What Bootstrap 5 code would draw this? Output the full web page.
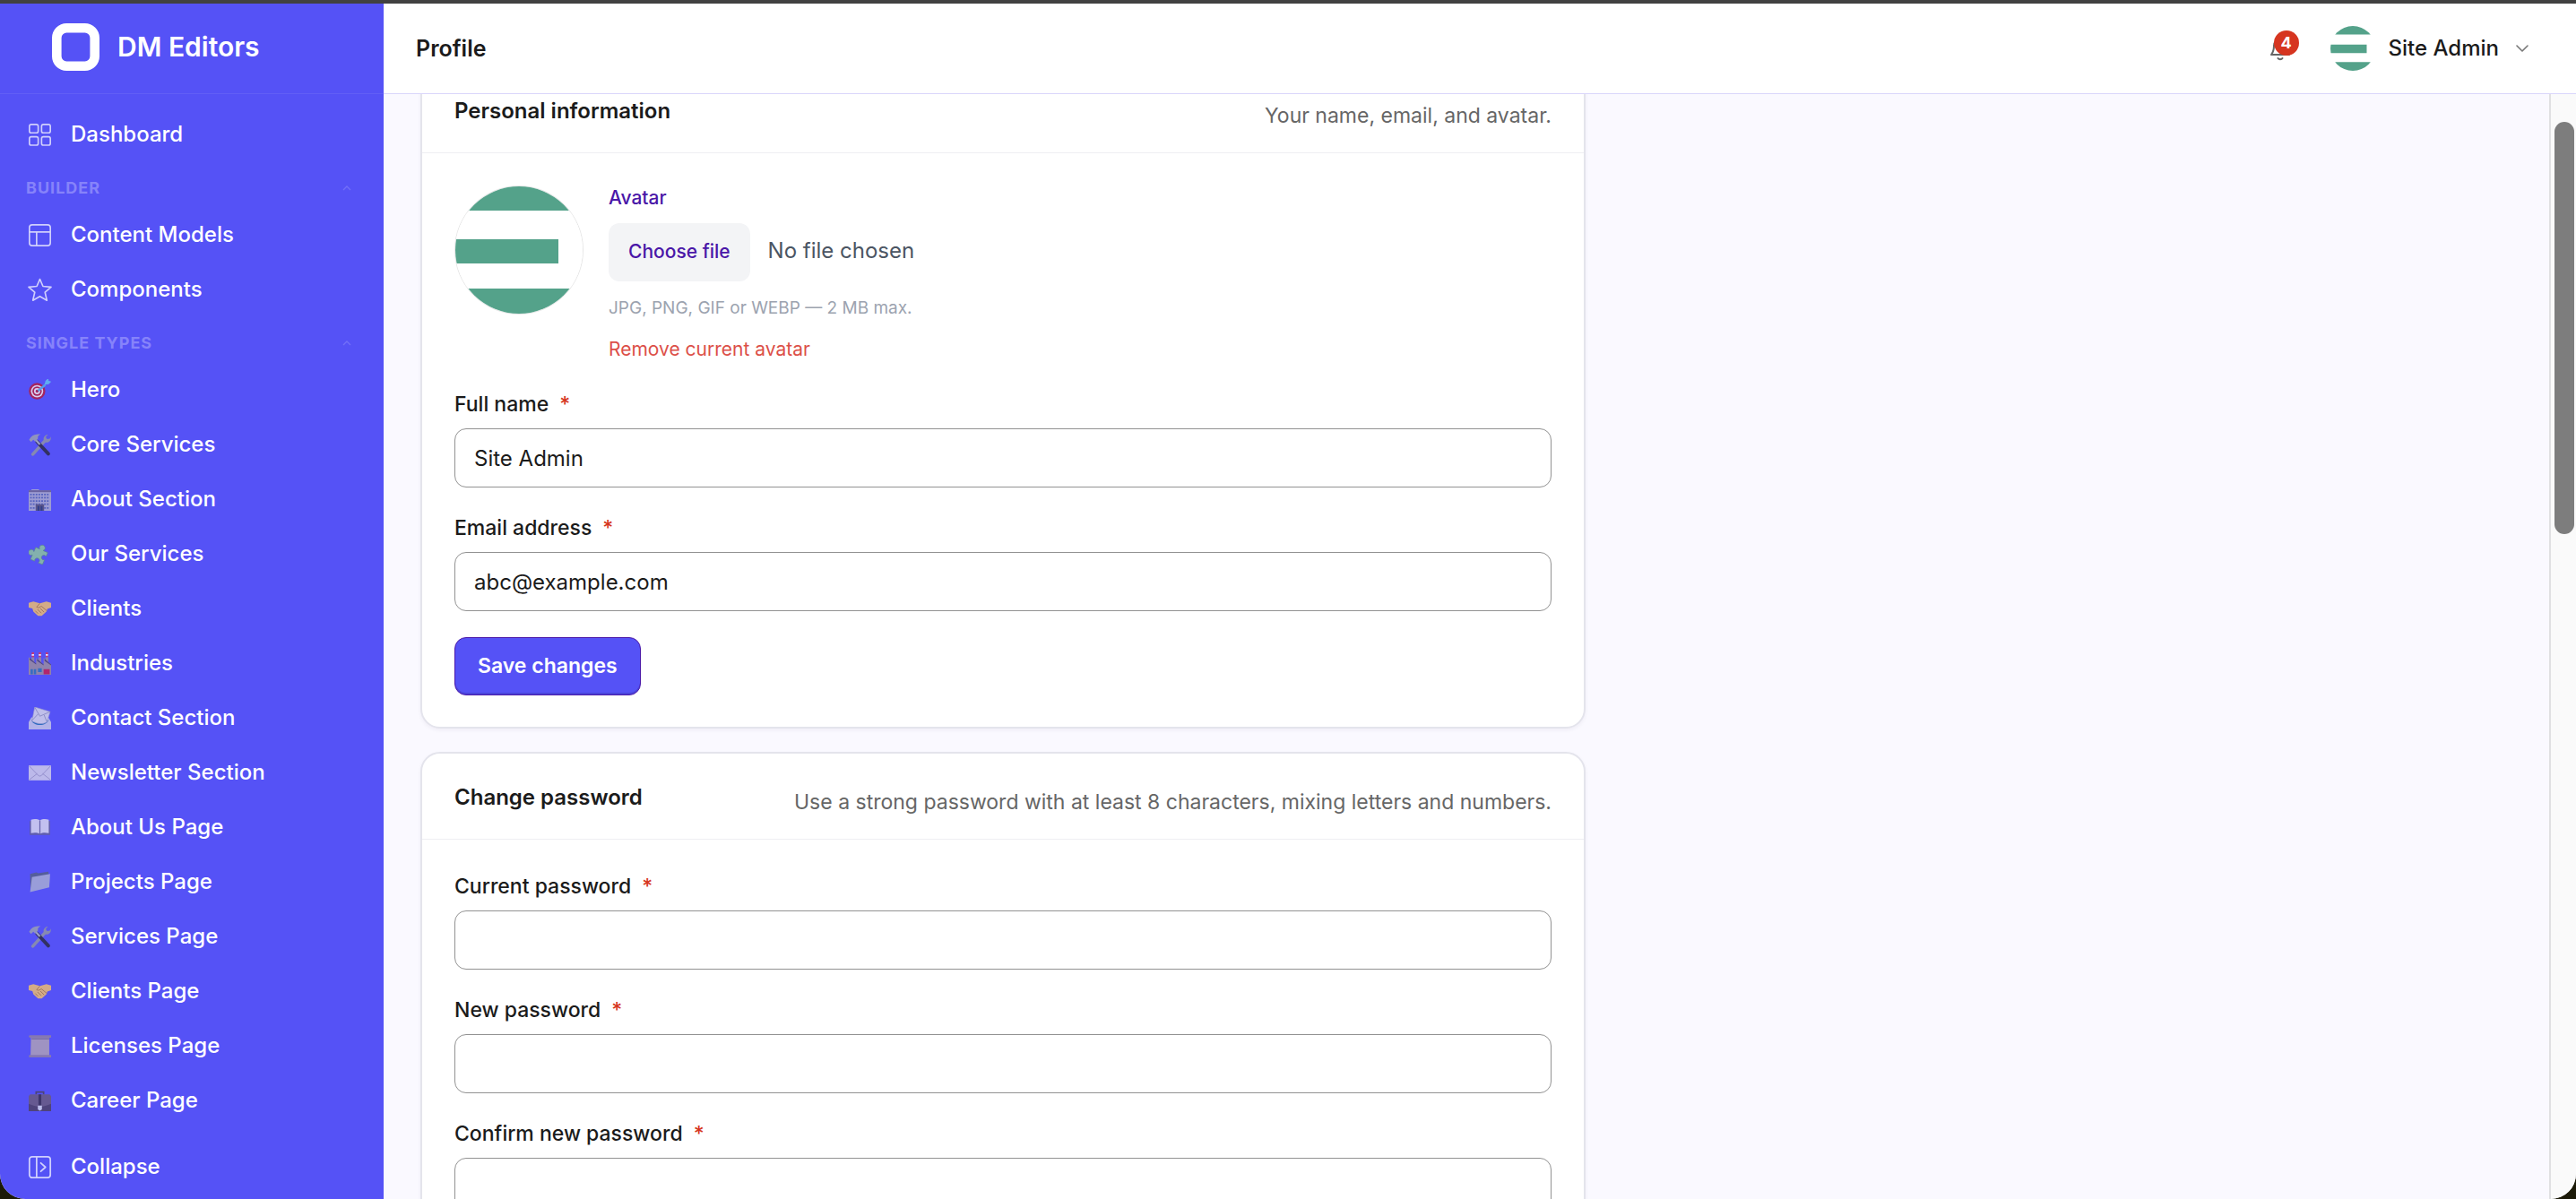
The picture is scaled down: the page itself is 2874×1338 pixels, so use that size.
<!DOCTYPE html>
<html lang="en">
<head>
<meta charset="utf-8">
<meta name="viewport" content="width=device-width, initial-scale=1">
<title>Profile – DM Editors</title>
<link href="https://cdn.jsdelivr.net/npm/bootstrap@5.3.0/dist/css/bootstrap.min.css" rel="stylesheet">
<style>
:root{--brand:#5552f6;--violet:#4a17a8;--ink:#1b1b1b;--danger:#d63520}
body{font-family:Inter,"Liberation Sans",sans-serif;font-size:24px;line-height:32px;color:var(--ink);background:#1c1a08}
.frame{border-radius:0 0 28px 28px;border-top:4px solid #414141;background:#faf9ff}
.sidebar{width:428px;background:var(--brand)}
.brand{height:101px;padding:0 58px 4px;gap:20px;border-bottom:1px solid #625ff6;font-size:30px;font-weight:600}
.side-nav{padding-top:15px}
.side-list{gap:1px}
.side-link{height:60px;padding:0 32px;gap:22px;font-weight:500;font-size:24px;color:#fff;text-decoration:none;border:0;background:none;text-align:left}
.side-link svg{width:25px;height:25px;flex:none;overflow:visible;opacity:.85}
.line-icon{fill:none;stroke:currentColor;stroke-linecap:round;stroke-linejoin:round}
.side-link svg.line-icon{opacity:.72}
.side-group{height:52px;padding:8px 36px 0 29px;font-size:18px;font-weight:700;letter-spacing:1px;color:#8683fa;border:0;background:none}
.side-group svg{width:10px;height:6px;opacity:.6}
.side-foot{padding-bottom:6px}
.topbar{height:101px;padding:0 53px 0 36px;background:#fff;border-bottom:1px solid #dad6fb;z-index:2}
.page-title{font-size:25px;line-height:32px;font-weight:600}
.bell{width:32px;height:50px;color:#666;border:0;background:none;margin-right:37px}
.bell svg{width:26px;height:28px}
.bell-count{left:6px;top:5px;width:28px;height:28px;background:var(--danger);color:#fff;font-size:18px;line-height:28px;font-weight:700}
.user-btn{gap:15px;border:0;background:none;font-weight:500;color:var(--ink)}
.user-btn .caret{width:14px;height:8px;margin-left:4px;color:#777}
.content{padding:0 41px;margin-top:-32px}
.panel{width:100%;max-width:1300px;border:2px solid #e4e4ec;border-radius:22px;background:#fff;box-shadow:0 2px 4px rgba(30,20,80,.05);margin-bottom:26px}
.panel-head{height:96px;padding:8px 36px 0;border-bottom:1px solid #efeff2}
.panel-head h2{font-size:24px;line-height:32px;font-weight:600;margin:0 0 6px}
.panel-head p{margin:4px 0 0;color:#666;font-size:23px}
.panel-body{padding:36px 36px 35px}
.avatar-lg{width:144px;height:144px;border:1px solid #e6e6e6;flex:none}
.avatar-row{gap:28px;margin-bottom:31px}
.field-cap{font-size:21px;line-height:28px;font-weight:500;margin-bottom:14px;color:var(--violet)}
.pick{height:65px;padding:0 22px 2px;border:0;border-radius:12px;background:#f3f4f6;color:var(--violet);font-size:21px;font-weight:500}
.pick:hover{background:#e9eaee;color:var(--violet)}
.no-file{color:#4b5563;font-size:24px;padding:0 0 4px 20px}
.hint{font-size:19px;line-height:28px;margin-bottom:18px;color:#9ca3af}
.remove{font-size:21px;line-height:28px;color:#dc4f48;text-decoration:none}
.field{margin-bottom:29px}
.field label{display:flex;gap:12px;font-size:23px;line-height:32px;font-weight:500;margin-bottom:11px}
.field label span{color:var(--danger)}
.field .form-control{height:66px;padding:0 21px;border:1px solid #929292;border-radius:13px;font-size:24px;color:var(--ink);background:#fff;box-shadow:none}
.save{height:65px;padding:0 25px;border:1px solid var(--violet);border-radius:13px;background:var(--brand);color:#fff;font-size:23px;font-weight:600;box-shadow:inset 0 -2px 0 #4a44d8}
.save:hover{background:#4744e6;color:#fff;border-color:var(--violet)}
.track{width:30px;border-left:2px solid #e0e0e2;background:#fafafa;padding:31px 2px 0 4px}
.thumb{height:460px;border-radius:11px;background:#7d7d7d}
</style>
<script src="https://cdn.jsdelivr.net/npm/bootstrap@5.3.0/dist/js/bootstrap.bundle.min.js"></script>
</head>
<body class="vh-100 overflow-hidden">
<svg class="d-none" xmlns="http://www.w3.org/2000/svg">
  <symbol id="i-target" viewBox="0 0 24 24"><circle cx="9" cy="13" r="8.800" fill="#b31f45"/><circle cx="9" cy="13" r="6.600" fill="#f0e6f2"/><circle cx="9" cy="13" r="5" fill="#b31f45"/><circle cx="9" cy="13" r="3.300" fill="#f0e6f2"/><circle cx="9" cy="13" r="1.600" fill="#b31f45"/><path d="M10 12.600 18 6" stroke="#55a9e8" stroke-width="2.400"/><path d="m17 6 1-4 3-3 .4 3 3 .6-3 3z" fill="#63bdf0"/></symbol>
  <symbol id="i-tools" viewBox="0 0 24 24"><path d="M4.500 22 17 8" stroke="#8f93a6" stroke-width="3.400" stroke-linecap="round"/><path d="M16 6.500c-.5-3 2-5.500 4.500-5.500L18.300 3.700l1.400 2 3-.5.800-2c1.200 4-2.500 7-5.600 5.800z" fill="#8f93a6"/><path d="M9 8.500 21 21.500" stroke="#2c2c48" stroke-width="3.600" stroke-linecap="round"/><path d="M7 6l5 5.500" stroke="#a7abc0" stroke-width="2.200"/><path d="M.5 6.500C3 1.500 7.500-.5 13 .8 10.500 1.500 9.300 3 10 5L7 8.300 5 6.500 2.500 8.800z" fill="#9a9fb4"/></symbol>
  <symbol id="i-office" viewBox="0 0 24 24"><path d="M3 1h8v2H3zM0 2h24v22H0z" fill="#a9a9cc"/><path d="M0 2h24v2H0z" fill="#6d6591"/><path d="M1.500 6.500h21M1.500 10h21M1.500 13.500h21M1.500 17h21M1.500 21h21" stroke="#5665b5" stroke-width="1.700" stroke-dasharray="1.800 1.200"/><path d="M7.500 17h9v7h-9z" fill="#5a5678"/><path d="M9.500 19h2v5h-2zM12.800 19h2v5h-2z" fill="#2c3c78"/></symbol>
  <symbol id="i-puzzle" viewBox="0 0 24 24"><path transform="rotate(24 12 12)" d="M5 7h4.500a3 3 0 1 1 4 0H19v4.500a2.600 2.600 0 1 0 0 4V21h-5a2.600 2.600 0 1 0-4 0H5v-5a3 3 0 1 1 0-4z" fill="#8cc2a2" stroke="#59907f" stroke-width=".6"/></symbol>
  <symbol id="i-shake" viewBox="0 0 24 24"><path d="M0 5.500 5 4l7 2 7-2 5 1.500v5L20 12l-1 3-5 4.500h-4L5 15l-1-3.500-4-1z" fill="#eabb74"/><path d="M12 6 8.500 10c2 1.500 4 0 5-1l6 5M7 14l3 3M9.500 12.500l4 4M12.500 11.500l4 4" fill="none" stroke="#ab7b45" stroke-width=".9"/></symbol>
  <symbol id="i-factory" viewBox="0 0 24 24"><path d="M3 5h3v6H3zM10.500 5h3v6h-3zM18 5h3v6h-3z" fill="#9888a3"/><path d="M3.300 0h2.400v5H3.300zM10.800 0h2.400v5h-2.400zM18.300 0h2.400v5h-2.400z" fill="#e03357"/><path d="M3.300 2h2.400v1.600H3.300zM10.800 2h2.400v1.600h-2.400zM18.300 2h2.400v1.600h-2.400z" fill="#fff"/><path d="M0 24V5l8 7V6l8 7V6l8 7v11z" fill="#9a8ca0"/><path d="m1 6 7 6v1L1 8zM9 7l7 6v1L9 9zM17 7l7 6v1l-7-5z" fill="#4c4374"/><path d="M2 18h2.500v5.500H2zM5.500 18H8v5.500H5.500zM10 17h4v4h-4z" fill="#3172b8"/><path d="M16 18h6.500v5.500H16z" fill="#c21f55"/></symbol>
  <symbol id="i-inbox" viewBox="0 0 24 24"><path d="M3 11h18l3 5v8H0v-8z" fill="#c3c5e6"/><path d="M3 14h18c-1 7-17 7-18 0z" fill="#2770b8"/><path d="M6.500 0 23 5l-3.500 11c-5 3-10 2-16-1z" fill="#d3d3e8" stroke="#a3a3c8" stroke-width=".6"/><path d="m6.500.3 5.500 9.500L23 5M3.500 14.500 10 7.500M19.500 16l-3-7.500" fill="none" stroke="#8e8eb8" stroke-width=".8"/></symbol>
  <symbol id="i-mail" viewBox="0 0 24 24"><path d="M0 4h24v16H0z" fill="#cfcce8"/><path d="m.5 4.500 9.500 10q2 2 4 0l9.500-10M.5 19.500 9 12.800M23.500 19.500 15 12.800" fill="none" stroke="#9d98c4" stroke-width=".9"/></symbol>
  <symbol id="i-book" viewBox="0 0 24 24"><path d="M1 5h22v15H1z" fill="#625fa2"/><path d="M2.500 3.500c4-1 7-.5 9.500.8 2.500-1.300 5.500-1.800 9.500-.8V18c-4-1-7-.6-9.500.8C9.500 17.400 6.500 17 2.500 18z" fill="#d6d4ee"/><path d="M12 4.300v15.500" stroke="#69669e" stroke-width="1.200"/></symbol>
  <symbol id="i-folder" viewBox="0 0 24 24"><path d="m1.500 3 7-1.500 1.500 1L21 .8 22 5 2 22z" fill="#56618c"/><path d="M3.500 6.500 23 3l-1 14.500L1.500 22.500z" fill="#a6abd4"/></symbol>
  <symbol id="i-scroll" viewBox="0 0 24 24"><path d="M2.500 2h19.500v20.500H2z" fill="#ad9fb9"/><path d="M1.500 1.500h22M1.500 22.700h22" stroke="#8e7fa5" stroke-width="2.600" stroke-linecap="round"/><path d="M3 4h19" stroke="#665a88" stroke-width="1"/></symbol>
  <symbol id="i-case" viewBox="0 0 24 24"><path d="M8 5V2.500h8V5" fill="none" stroke="#4c4360" stroke-width="1.600"/><path d="M1.500 5h21L24 7v16H0V7z" fill="#6a5b80"/><path d="M0 15c8 4 16 4 24 0v8H0z" fill="#4d4166"/><path d="M10.500 5h3v12h-3z" fill="#3b3152"/><path d="M9.800 17h4.400v4l-2.200 1.500L9.800 21z" fill="#cfd0ea"/></symbol>
  <symbol id="i-up" viewBox="0 0 10 6"><path d="m1 5 4-4 4 4" fill="none" stroke="currentColor" stroke-width="1.300"/></symbol>
  <symbol id="i-stripes" viewBox="0 0 142 142"><path fill="#fff" d="M0 0h142v142H0z"/><path fill="#54a28a" d="M0 0h142v27H0zM0 59h115v27H0zM0 114h142v28H0z"/></symbol>
</svg>

<div class="frame d-flex h-100 overflow-hidden">
  <aside class="sidebar d-flex flex-column flex-shrink-0 text-white">
    <div class="brand d-flex align-items-center flex-shrink-0">
      <svg width="53" height="53" viewBox="0 0 53 53" aria-hidden="true"><rect x="5.300" y="5.300" width="42.400" height="42.400" rx="11" fill="none" stroke="#fff" stroke-width="10.600"/></svg>
      <span>DM Editors</span>
    </div>
    <nav class="side-nav flex-grow-1 overflow-hidden">
      <div class="side-list d-flex flex-column">
        <a href="#" class="side-link d-flex align-items-center"><svg class="line-icon" viewBox="0 0 24 24" stroke-width="1.600"><rect x=".8" y=".8" width="9.400" height="9" rx="2"/><rect x="13.800" y=".8" width="9.400" height="9" rx="2"/><rect x=".8" y="14" width="9.400" height="9" rx="2"/><rect x="13.800" y="14" width="9.400" height="9" rx="2"/></svg>Dashboard</a>
      </div>
      <button type="button" class="side-group w-100 d-flex align-items-center justify-content-between">BUILDER<svg><use href="#i-up"/></svg></button>
      <div class="side-list d-flex flex-column">
        <a href="#" class="side-link d-flex align-items-center"><svg class="line-icon" viewBox="0 0 24 24" stroke-width="1.600"><rect x=".8" y=".8" width="22.400" height="22.400" rx="3"/><path d="M.8 8.500h22.400M8.500 8.500v14.700"/></svg>Content Models</a>
        <a href="#" class="side-link d-flex align-items-center"><svg class="line-icon" viewBox="0 0 24 24" stroke-width="1.600"><path d="m12 .5 3.300 7.700 8.700.8-6.500 5.600 2 8.600L12 18.900l-7.500 4.300 2-8.600L0 9l8.700-.8z"/></svg>Components</a>
      </div>
      <button type="button" class="side-group w-100 d-flex align-items-center justify-content-between">SINGLE TYPES<svg><use href="#i-up"/></svg></button>
      <div class="side-list d-flex flex-column">
        <a href="#" class="side-link d-flex align-items-center"><svg><use href="#i-target"/></svg>Hero</a>
        <a href="#" class="side-link d-flex align-items-center"><svg><use href="#i-tools"/></svg>Core Services</a>
        <a href="#" class="side-link d-flex align-items-center"><svg><use href="#i-office"/></svg>About Section</a>
        <a href="#" class="side-link d-flex align-items-center"><svg><use href="#i-puzzle"/></svg>Our Services</a>
        <a href="#" class="side-link d-flex align-items-center"><svg><use href="#i-shake"/></svg>Clients</a>
        <a href="#" class="side-link d-flex align-items-center"><svg><use href="#i-factory"/></svg>Industries</a>
        <a href="#" class="side-link d-flex align-items-center"><svg><use href="#i-inbox"/></svg>Contact Section</a>
        <a href="#" class="side-link d-flex align-items-center"><svg><use href="#i-mail"/></svg>Newsletter Section</a>
        <a href="#" class="side-link d-flex align-items-center"><svg><use href="#i-book"/></svg>About Us Page</a>
        <a href="#" class="side-link d-flex align-items-center"><svg><use href="#i-folder"/></svg>Projects Page</a>
        <a href="#" class="side-link d-flex align-items-center"><svg><use href="#i-tools"/></svg>Services Page</a>
        <a href="#" class="side-link d-flex align-items-center"><svg><use href="#i-shake"/></svg>Clients Page</a>
        <a href="#" class="side-link d-flex align-items-center"><svg><use href="#i-scroll"/></svg>Licenses Page</a>
        <a href="#" class="side-link d-flex align-items-center"><svg><use href="#i-case"/></svg>Career Page</a>
      </div>
    </nav>
    <div class="side-foot">
      <button type="button" class="side-link w-100 d-flex align-items-center"><svg class="line-icon" viewBox="0 0 24 24" stroke-width="1.700"><rect x=".8" y=".8" width="22.400" height="22.400" rx="3"/><path d="M8.500.8v22.400M13 7.500l5 4.500-5 4.500"/></svg>Collapse</button>
    </div>
  </aside>

  <div class="d-flex flex-column flex-grow-1 overflow-hidden">
    <header class="topbar d-flex align-items-center flex-shrink-0 position-relative">
      <h1 class="page-title mb-0 me-auto">Profile</h1>
      <button type="button" class="bell position-relative p-0 d-flex align-items-center" aria-label="Notifications">
        <svg class="line-icon" viewBox="0 0 26 28" stroke-width="2"><path d="M3 21h20c-2-2.500-3-5-3-10a7 7 0 0 0-14 0c0 5-1 7.500-3 10z"/><path d="M10.500 25c1 1.600 4 1.600 5 0"/></svg>
        <span class="bell-count position-absolute rounded-circle text-center">4</span>
      </button>
      <button type="button" class="user-btn d-flex align-items-center p-0">
        <svg class="rounded-circle" width="50" height="50"><use href="#i-stripes"/></svg>
        <span>Site Admin</span>
        <svg class="caret line-icon" viewBox="0 0 14 8" stroke-width="1.600"><path d="m1 1 6 6 6-6"/></svg>
      </button>
    </header>

    <div class="d-flex flex-grow-1 overflow-hidden">
      <main class="flex-grow-1 overflow-hidden">
        <div class="content">
          <section class="panel">
            <div class="panel-head d-flex align-items-center justify-content-between">
              <h2>Personal information</h2>
              <p>Your name, email, and avatar.</p>
            </div>
            <form class="panel-body">
              <div class="avatar-row d-flex">
                <svg class="avatar-lg rounded-circle" role="img" aria-label="Current avatar"><use href="#i-stripes"/></svg>
                <div>
                  <div class="field-cap">Avatar</div>
                  <div class="d-flex align-items-center mb-3">
                    <label class="pick btn d-flex align-items-center" for="avatar">Choose file</label>
                    <input class="visually-hidden" type="file" id="avatar" accept="image/*">
                    <span class="no-file">No file chosen</span>
                  </div>
                  <div class="hint">JPG, PNG, GIF or WEBP — 2 MB max.</div>
                  <a class="remove d-block" href="#">Remove current avatar</a>
                </div>
              </div>
              <div class="field">
                <label for="name">Full name <span>*</span></label>
                <input class="form-control" id="name" type="text" value="Site Admin">
              </div>
              <div class="field">
                <label for="email">Email address <span>*</span></label>
                <input class="form-control" id="email" type="email" value="abc@example.com">
              </div>
              <button type="button" class="save btn">Save changes</button>
            </form>
          </section>

          <section class="panel">
            <div class="panel-head d-flex align-items-center justify-content-between">
              <h2>Change password</h2>
              <p>Use a strong password with at least 8 characters, mixing letters and numbers.</p>
            </div>
            <form class="panel-body">
              <div class="field">
                <label for="current">Current password <span>*</span></label>
                <input class="form-control" id="current" type="password">
              </div>
              <div class="field">
                <label for="fresh">New password <span>*</span></label>
                <input class="form-control" id="fresh" type="password">
              </div>
              <div class="field">
                <label for="confirm">Confirm new password <span>*</span></label>
                <input class="form-control" id="confirm" type="password">
              </div>
            </form>
          </section>
        </div>
      </main>
      <div class="track flex-shrink-0"><div class="thumb"></div></div>
    </div>
  </div>
</div>
</body>
</html>
